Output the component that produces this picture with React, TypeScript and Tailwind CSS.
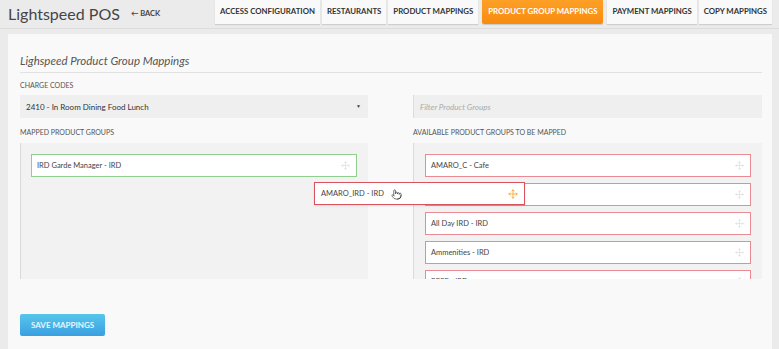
import { Move, Pointer } from 'lucide-react';

const tabs = [
  'ACCESS CONFIGURATION',
  'RESTAURANTS',
  'PRODUCT MAPPINGS',
  'PRODUCT GROUP MAPPINGS',
  'PAYMENT MAPPINGS',
  'COPY MAPPINGS',
];

const available = ['AMARO_C - Cafe', 'AMARO_IRD - IRD', 'All Day IRD - IRD', 'Ammenities - IRD', 'BEEF - IRD'];

function GroupItem({ label, tone }: { label: string; tone: 'green' | 'red' }) {
  return (
    <div
      className={
        tone === 'green'
          ? 'flex h-[23px] shrink-0 items-center justify-between border border-[#8fd08f] bg-white pl-[5px] pr-[6px]'
          : 'flex h-[23px] shrink-0 items-center justify-between border border-[#ea8a92] bg-white pl-[5px] pr-[6px]'
      }
    >
      <span className="whitespace-nowrap text-[7.5px] text-[#444]">{label}</span>
      <Move size={9} strokeWidth={1.5} className="text-[#d6d6d6]" />
    </div>
  );
}

export default function App() {
  return (
    <div
      className="relative h-[349px] w-[779px] overflow-hidden bg-[#ebebeb]"
      style={{ fontFamily: 'Lato, "Open Sans", sans-serif' }}
    >
      {/* header */}
      <div className="flex h-[29px] items-start border-b border-[#dcdcdc]">
        <div className="flex h-[27px] shrink-0 items-center whitespace-nowrap pl-[8px]">
          <span className="text-[16px] text-[#454545]">Lightspeed POS</span>
          <span className="ml-[11px] text-[7.5px] font-bold text-[#444]">← BACK</span>
        </div>
        <div className="ml-auto mr-[7px] flex gap-[2px]">
          {tabs.map((t) =>
            t === 'PRODUCT GROUP MAPPINGS' ? (
              <div
                key={t}
                className="mx-[2px] flex h-[24px] items-center whitespace-nowrap rounded-b-[2px] bg-gradient-to-b from-[#fda026] to-[#f88b0c] px-[6px] text-[7.8px] font-bold text-white shadow-[0_1px_1px_rgba(0,0,0,0.15)]"
              >
                {t}
              </div>
            ) : (
              <div
                key={t}
                className="flex h-[24px] items-center whitespace-nowrap bg-[#f9f9f9] px-[5px] text-[7.8px] font-bold text-[#333] shadow-[0_1px_1px_rgba(0,0,0,0.12)]"
              >
                {t}
              </div>
            ),
          )}
        </div>
      </div>

      {/* panel */}
      <div className="ml-[8px] mt-[5px] h-[320px] w-[764px] bg-[#f9f9f9] pl-[12px] pr-[10px] pt-[19px]">
        <div className="border-b border-[#e2e2e2] pb-[3px]">
          <h2 className="text-[11.5px] italic leading-[16px] text-[#555]">Lighspeed Product Group Mappings</h2>
        </div>

        <div className="grid grid-cols-[348px_349px] gap-x-[45px]">
          <div>
            <div className="mt-[8px] text-[7px] leading-[9px] text-[#555]">CHARGE CODES</div>
            <div className="mt-[5px] flex h-[23px] items-center justify-between bg-[#efefef] pl-[6px] pr-[7px]">
              <span className="text-[8px] text-[#333]">2410 - In Room Dining Food Lunch</span>
              <span className="text-[5px] text-[#444]">▼</span>
            </div>
          </div>
          <div className="pt-[22px]">
            <div className="flex h-[23px] items-center border-l border-[#dcdcdc] bg-[#efefef] pl-[6px]">
              <span className="text-[8px] italic text-[#aaa]">Filter Product Groups</span>
            </div>
          </div>

          <div>
            <div className="mt-[10px] text-[7px] leading-[9px] text-[#555]">MAPPED PRODUCT GROUPS</div>
            <div className="mt-[6px] flex h-[136px] flex-col border-l border-[#dadada] bg-[#f2f2f2] pl-[10px] pr-[11px] pt-[11px]">
              <GroupItem label="IRD Garde Manager - IRD" tone="green" />
            </div>
          </div>
          <div>
            <div className="mt-[10px] text-[7px] leading-[9px] text-[#555]">AVAILABLE PRODUCT GROUPS TO BE MAPPED</div>
            <div className="mt-[6px] flex h-[136px] flex-col gap-[6px] overflow-hidden border-l border-[#dadada] bg-[#f2f2f2] pl-[11px] pr-[11px] pt-[11px]">
              {available.map((a) => (
                <GroupItem key={a} label={a} tone="red" />
              ))}
            </div>
          </div>
        </div>

        <button className="mt-[35px] h-[22px] rounded-[2px] bg-gradient-to-b from-[#56c6ec] to-[#3a9fe0] px-[11px] text-[8px] font-bold text-[#e8f6fd]">
          SAVE MAPPINGS
        </button>
      </div>

      {/* dragged item */}
      <div className="absolute left-[314px] top-[182px] flex h-[23px] w-[211px] items-center justify-between border border-[#d9535f] bg-white pl-[6px] pr-[6px] shadow-[0_1px_2px_rgba(0,0,0,0.1)]">
        <span className="text-[7.5px] text-[#444]">AMARO_IRD - IRD</span>
        <Move size={10} strokeWidth={2} className="text-[#f7a52a]" />
      </div>
      <Pointer size={11} strokeWidth={1.5} className="absolute left-[391px] top-[189px] text-[#333]" />
    </div>
  );
}
